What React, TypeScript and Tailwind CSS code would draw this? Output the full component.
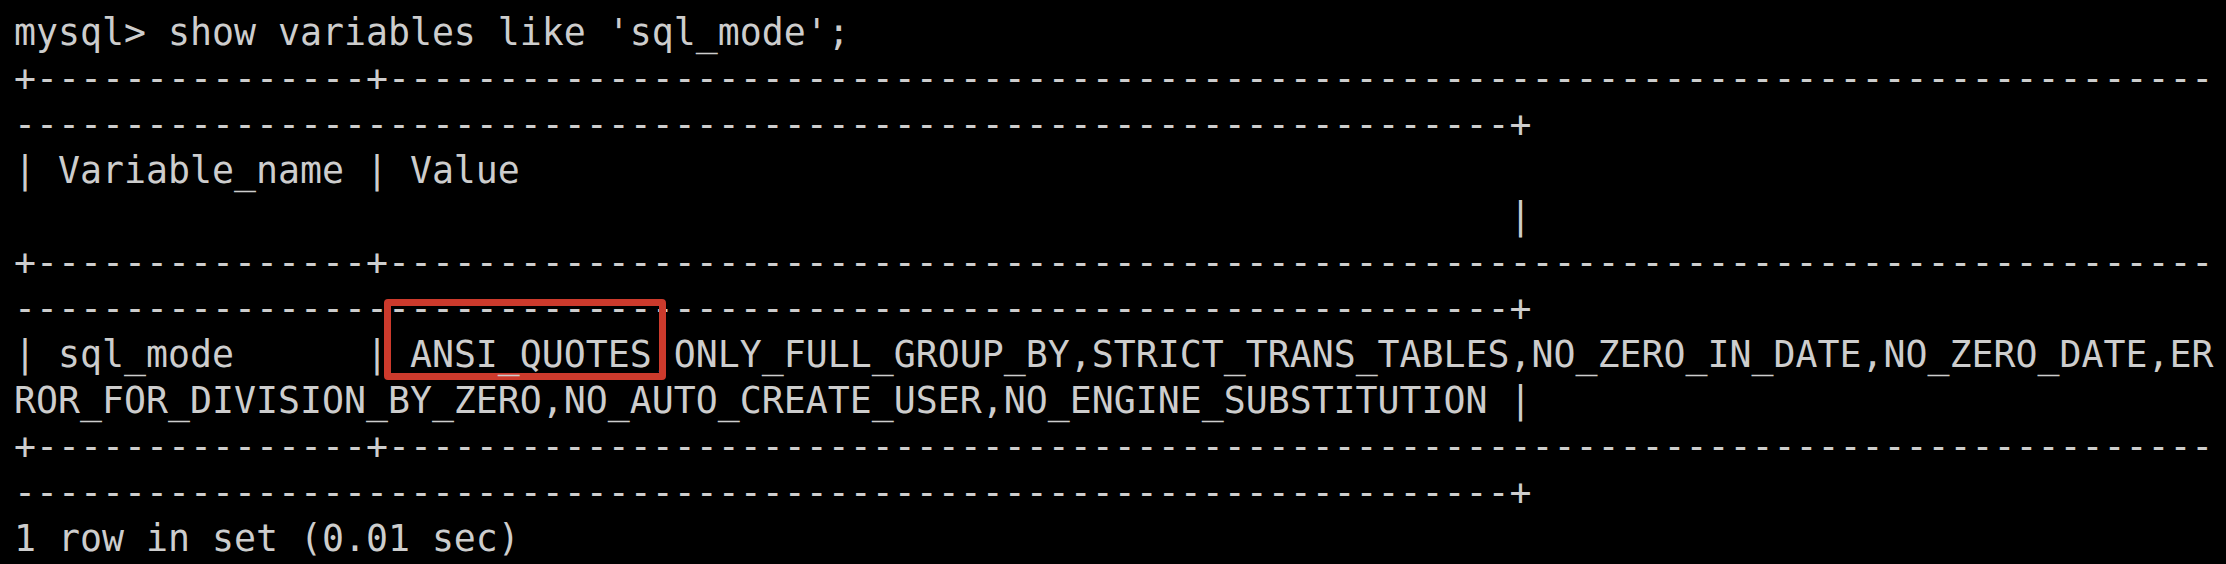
import React from "react";

const dashes = (n: number) => "-".repeat(n);

export default function App() {
  const border1 = "+" + dashes(15) + "+" + dashes(83);
  const border2 = dashes(68) + "+";
  const lineCls = "h-[46px] whitespace-pre";
  return (
    <div className="w-[2226px] h-[564px] bg-black overflow-hidden">
      <div
        className="pt-[10px] pl-[14px] text-[36.54px] leading-[46px] text-[#cdcdcd]"
        style={{ fontFamily: '"DejaVu Sans Mono", "Liberation Mono", monospace' }}
      >
        <div className={lineCls}>mysql&gt; show variables like 'sql_mode';</div>
        <div className={lineCls}>{border1}</div>
        <div className={lineCls}>{border2}</div>
        <div className={lineCls}>| Variable_name | Value</div>
        <div className={lineCls}>{" ".repeat(68) + "|"}</div>
        <div className={lineCls}>{border1}</div>
        <div className={lineCls}>{border2}</div>
        <div className={lineCls}>
          {"| sql_mode      | "}
          <span className="relative">
            <span className="absolute left-[-26px] right-[-14px] top-[-34px] bottom-[-4px] border-[7px] border-[#cc3a2c] rounded-[4px]" />
            <span className="relative">ANSI_QUOTES</span>
          </span>
          ,ONLY_FULL_GROUP_BY,STRICT_TRANS_TABLES,NO_ZERO_IN_DATE,NO_ZERO_DATE,ER
        </div>
        <div className={lineCls}>ROR_FOR_DIVISION_BY_ZERO,NO_AUTO_CREATE_USER,NO_ENGINE_SUBSTITUTION |</div>
        <div className={lineCls}>{border1}</div>
        <div className={lineCls}>{border2}</div>
        <div className={lineCls}>1 row in set (0.01 sec)</div>
      </div>
    </div>
  );
}
